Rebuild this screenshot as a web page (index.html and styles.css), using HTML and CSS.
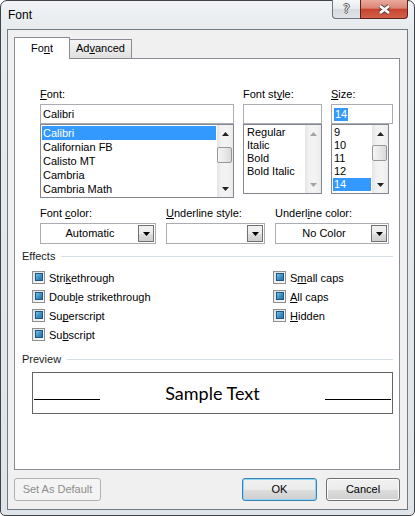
FILE: index.html
```html
<!DOCTYPE html>
<html>
<head>
<meta charset="utf-8">
<title>Font</title>
<link rel="stylesheet" href="styles.css">
</head>
<body>
<div class="window">
  <div class="titlebar">
    <div class="title">Font</div>
    <div class="caption">
      <div class="cap help"><span class="q">?</span></div>
      <div class="cap close">
        <svg width="15" height="11" viewBox="0 0 15 11"><path d="M3 2L12 9M12 2L3 9" stroke="#5a4440" stroke-width="4.6" fill="none"/><path d="M3 2L12 9M12 2L3 9" stroke="#fff" stroke-width="2.6" fill="none"/></svg>
      </div>
    </div>
  </div>
  <div class="client">
    <div class="tabs">
      <div class="tab active">Fo<u>n</u>t</div>
      <div class="tab inactive">Ad<u>v</u>anced</div>
    </div>
    <div class="panel">
      <div class="row1">
        <div class="col col-font">
          <div class="lbl"><u>F</u>ont:</div>
          <div class="field">Calibri</div>
          <div class="list list-font">
            <div class="items">
              <div class="item sel">Calibri</div>
              <div class="item">Californian FB</div>
              <div class="item">Calisto MT</div>
              <div class="item">Cambria</div>
              <div class="item">Cambria Math</div>
            </div>
            <div class="sb">
              <div class="sb-btn"><svg width="7" height="4" viewBox="0 0 7 4"><path d="M0 4L3.5 0L7 4Z" fill="#222"/></svg></div>
              <div class="sb-track"><div class="thumb thumb-font"></div></div>
              <div class="sb-btn"><svg width="7" height="4" viewBox="0 0 7 4"><path d="M0 0L7 0L3.5 4Z" fill="#222"/></svg></div>
            </div>
          </div>
        </div>
        <div class="col col-style">
          <div class="lbl">Font st<u>y</u>le:</div>
          <div class="field"></div>
          <div class="list list-style">
            <div class="items">
              <div class="item ind">Regular</div>
              <div class="item ind">Italic</div>
              <div class="item ind">Bold</div>
              <div class="item ind">Bold Italic</div>
            </div>
            <div class="sb">
              <div class="sb-btn"><svg width="7" height="4" viewBox="0 0 7 4"><path d="M0 4L3.5 0L7 4Z" fill="#a3a3a3"/></svg></div>
              <div class="sb-track"></div>
              <div class="sb-btn"><svg width="7" height="4" viewBox="0 0 7 4"><path d="M0 0L7 0L3.5 4Z" fill="#a3a3a3"/></svg></div>
            </div>
          </div>
        </div>
        <div class="col col-size">
          <div class="lbl"><u>S</u>ize:</div>
          <div class="field"><span class="hl">14</span></div>
          <div class="list list-size">
            <div class="items">
              <div class="item">9</div>
              <div class="item">10</div>
              <div class="item">11</div>
              <div class="item">12</div>
              <div class="item sel">14</div>
            </div>
            <div class="sb">
              <div class="sb-btn"><svg width="7" height="4" viewBox="0 0 7 4"><path d="M0 4L3.5 0L7 4Z" fill="#222"/></svg></div>
              <div class="sb-track"><div class="thumb thumb-size"></div></div>
              <div class="sb-btn"><svg width="7" height="4" viewBox="0 0 7 4"><path d="M0 0L7 0L3.5 4Z" fill="#222"/></svg></div>
            </div>
          </div>
        </div>
      </div>

      <div class="row2">
        <div class="dcol dcol1">
          <div class="lbl">Font <u>c</u>olor:</div>
          <div class="dd"><span class="dd-val">Automatic</span><span class="dd-btn"><svg width="7" height="4" viewBox="0 0 7 4"><path d="M0 0L7 0L3.5 4Z" fill="#000"/></svg></span></div>
        </div>
        <div class="dcol dcol2">
          <div class="lbl"><u>U</u>nderline style:</div>
          <div class="dd"><span class="dd-val"></span><span class="dd-btn"><svg width="7" height="4" viewBox="0 0 7 4"><path d="M0 0L7 0L3.5 4Z" fill="#000"/></svg></span></div>
        </div>
        <div class="dcol dcol3">
          <div class="lbl">Underl<u>i</u>ne color:</div>
          <div class="dd"><span class="dd-val">No Color</span><span class="dd-btn"><svg width="7" height="4" viewBox="0 0 7 4"><path d="M0 0L7 0L3.5 4Z" fill="#000"/></svg></span></div>
        </div>
      </div>

      <div class="group group-effects"><span class="gtext">Effects</span><span class="gline"></span></div>
      <div class="effects">
        <div class="chk"><span class="cb"></span><span>Stri<u>k</u>ethrough</span></div>
        <div class="chk"><span class="cb"></span><span>Doub<u>l</u>e strikethrough</span></div>
        <div class="chk"><span class="cb"></span><span>Su<u>p</u>erscript</span></div>
        <div class="chk"><span class="cb"></span><span>Su<u>b</u>script</span></div>
        <div class="chk"><span class="cb"></span><span>S<u>m</u>all caps</span></div>
        <div class="chk"><span class="cb"></span><span><u>A</u>ll caps</span></div>
        <div class="chk"><span class="cb"></span><span><u>H</u>idden</span></div>
      </div>

      <div class="group group-preview"><span class="gtext">Preview</span><span class="gline"></span></div>
      <div class="preview">
        <span class="pv-line"></span>
        <span class="pv-text">Sample Text</span>
        <span class="pv-line"></span>
      </div>
    </div>
    <div class="buttons">
      <div class="btn btn-default">Set As Default</div>
      <div class="spacer"></div>
      <div class="btn btn-ok">OK</div>
      <div class="btn btn-cancel">Cancel</div>
    </div>
  </div>
</div>
</body>
</html>
```

FILE: styles.css
```css
html, body {
  margin: 0;
  padding: 0;
  background: #ffffff;
}
body {
  font-family: "Liberation Sans", Arial, sans-serif;
  font-size: 11px;
  color: #000;
}
u {
  text-decoration: underline;
  text-decoration-skip-ink: none;
  text-underline-offset: 1px;
}

.window {
  box-sizing: border-box;
  width: 415px;
  height: 516px;
  border: 1px solid #3e4449;
  border-radius: 7px 7px 5px 5px;
  background: linear-gradient(to bottom, #f1f3f5 0, #e7ebee 28px, #dfe4e8 100%);
  display: flex;
  flex-direction: column;
}

.titlebar {
  flex: none;
  height: 28px;
  box-sizing: border-box;
  padding: 0 6px 0 7px;
  display: flex;
  justify-content: space-between;
  align-items: flex-start;
}
.title {
  font-size: 12px;
  line-height: 14px;
  margin-top: 7px;
}
.caption {
  display: flex;
  margin-top: -1px;
}
.cap {
  height: 19px;
  box-sizing: border-box;
  display: flex;
  align-items: center;
  justify-content: center;
}
.help {
  width: 28px;
  border: 1px solid #6d747c;
  border-top: none;
  border-right: none;
  border-radius: 0 0 0 4px;
  background: linear-gradient(#f6f7f9, #e7eaee 50%, #d6dbe0 51%, #dfe3e8);
}
.q {
  font-family: "DejaVu Sans", sans-serif;
  font-size: 12px;
  line-height: 12px;
  color: #f4f4f4;
  text-shadow: -1px 0 0 #555, 1px 0 0 #555, 0 -1px 0 #555, 0 1px 0 #555;
}
.close {
  width: 48px;
  border: 1px solid #5c2118;
  border-top: none;
  border-radius: 0 0 4px 0;
  background: linear-gradient(#e9ab9c, #dc8574 45%, #c8442e 52%, #d2604b);
}

.client {
  flex: none;
  height: 481px;
  margin: 0 6px;
  box-sizing: border-box;
  border: 1px solid #6f7a84;
  background: #f0f0f0;
  padding: 7px 7px 8px 6px;
  display: flex;
  flex-direction: column;
}

.tabs {
  flex: none;
  height: 21px;
  display: flex;
  align-items: flex-end;
}
.tab {
  box-sizing: border-box;
  border: 1px solid #898c95;
  border-bottom: none;
  line-height: 13px;
  text-align: center;
}
.tab.active {
  width: 56px;
  height: 22px;
  margin-bottom: -1px;
  padding-top: 4px;
  background: #fff;
  position: relative;
  z-index: 1;
}
.tab.inactive {
  width: 63px;
  height: 19px;
  margin-left: -1px;
  padding-top: 2px;
  background: linear-gradient(#f4f4f4, #ebebeb 50%, #e0e0e0);
}

.panel {
  flex: none;
  box-sizing: border-box;
  height: 412px;
  border: 1px solid #898c95;
  background: #fff;
  padding-top: 29px;
}

.lbl {
  height: 13px;
  line-height: 13px;
  margin-bottom: 3px;
  white-space: nowrap;
}

.row1 {
  display: flex;
  align-items: flex-start;
  gap: 9px;
  padding-left: 25px;
}
.col-font { width: 194px; }
.col-style { width: 79px; }
.col-size { width: 62px; }

.field {
  box-sizing: border-box;
  height: 20px;
  border: 1px solid #abadb3;
  background: #fff;
  padding: 2px 1px 0 2px;
  line-height: 14px;
}
.hl {
  background: #3399ff;
  color: #fff;
  padding: 0 1px;
  display: inline-block;
  line-height: 13px;
}

.list {
  box-sizing: border-box;
  border: 1px solid #828790;
  background: #fff;
  display: flex;
}
.list-font { height: 74px; }
.list-style { height: 70px; }
.list-size { height: 70px; width: 58px; }

.items {
  flex: 1;
  min-width: 0;
  padding: 1px;
}
.item {
  height: 13px;
  line-height: 13px;
  padding-left: 1px;
  white-space: nowrap;
  overflow: hidden;
}
.list-font .item {
  height: 14px;
  line-height: 14px;
}
.item.ind { padding-left: 2px; }
.list-size .item { padding-left: 1px; }
.item.sel {
  background: #3399ff;
  color: #fff;
}

.sb {
  flex: none;
  width: 16px;
  display: flex;
  flex-direction: column;
  background: linear-gradient(90deg, #e4e4e4, #f1f1f1 25%, #f4f4f4 60%, #ebebeb);
}
.sb-btn {
  flex: none;
  height: 17px;
  display: flex;
  align-items: center;
  justify-content: center;
}
.sb-track { flex: 1; }
.thumb {
  box-sizing: border-box;
  width: 15px;
  height: 16px;
  border: 1px solid #979797;
  border-radius: 2px;
  background: linear-gradient(90deg, #f5f5f5, #e9e9e9 50%, #d9d9d9);
}
.thumb-font { margin-top: 5px; }
.thumb-size { margin-top: 3px; }

.row2 {
  display: flex;
  gap: 10px;
  padding-left: 25px;
  margin-top: 9px;
}
.dcol1 { width: 116px; }
.dcol2 { width: 99px; }
.dcol3 { width: 114px; }
.dd {
  box-sizing: border-box;
  height: 21px;
  border: 1px solid #abadb3;
  background: #fff;
  padding: 1px;
  display: flex;
}
.dd-val {
  flex: 1;
  text-align: center;
  line-height: 17px;
}
.dd-btn {
  flex: none;
  box-sizing: border-box;
  width: 16px;
  height: 17px;
  border: 1px solid #707070;
  background: linear-gradient(#f2f2f2, #ebebeb 50%, #dddddd 51%, #cfcfcf);
  display: flex;
  align-items: center;
  justify-content: center;
}

.group {
  display: flex;
  align-items: center;
  height: 13px;
  line-height: 13px;
  padding-left: 7px;
  margin-right: 6px;
}
.group-effects { margin-top: 6px; }
.group-preview { margin-top: 9px; }
.gtext { color: #1b1b1b; }
.gline {
  flex: 1;
  height: 1px;
  margin-left: 6px;
  background: #d5dfe5;
}

.effects {
  margin-top: 5px;
  padding-left: 17px;
  display: grid;
  grid-template-columns: 241px auto;
  grid-template-rows: repeat(4, 19px);
  grid-auto-flow: column;
}
.chk {
  display: flex;
  align-items: center;
  height: 19px;
  white-space: nowrap;
}
.cb {
  flex: none;
  box-sizing: border-box;
  width: 13px;
  height: 13px;
  margin-right: 4px;
  border: 1px solid #8e8f8f;
  background: linear-gradient(135deg, #dedede, #fbfbfb);
  padding: 1px 1px 2px 2px;
}
.cb::after {
  content: "";
  display: block;
  box-sizing: border-box;
  width: 8px;
  height: 8px;
  border: 1px solid #1d5680;
  background: linear-gradient(135deg, #79c3e9, #3a8fc4 55%, #2a74a8);
}

.preview {
  box-sizing: border-box;
  width: 361px;
  height: 42px;
  margin: 6px 0 0 17px;
  border: 1px solid #646464;
  padding: 0 1px;
  display: flex;
  align-items: center;
}
.pv-line {
  flex: none;
  width: 66px;
  height: 1px;
  background: #000;
  align-self: flex-start;
  margin-top: 26px;
}
.pv-text {
  flex: 1;
  text-align: center;
  font-family: Lato, "Open Sans", sans-serif;
  font-size: 18px;
  line-height: 22px;
}

.buttons {
  flex: none;
  display: flex;
  height: 23px;
  margin-top: 8px;
}
.spacer { flex: 1; }
.btn {
  box-sizing: border-box;
  height: 23px;
  border-radius: 3px;
  display: flex;
  align-items: center;
  justify-content: center;
  line-height: 13px;
}
.btn-default {
  width: 87px;
  border: 1px solid #adb2b5;
  background: #f4f4f4;
  color: #8d8d8d;
}
.btn-ok {
  width: 75px;
  border: 1px solid #3c7fb1;
  box-shadow: inset 0 0 0 1px #8fd6f5;
  background: linear-gradient(#f2f2f2, #ebebeb 50%, #dddddd 51%, #cfcfcf);
}
.btn-cancel {
  width: 74px;
  margin-left: 9px;
  border: 1px solid #707070;
  box-shadow: inset 0 0 0 1px #fcfcfc;
  background: linear-gradient(#f2f2f2, #ebebeb 50%, #dddddd 51%, #cfcfcf);
}
```
